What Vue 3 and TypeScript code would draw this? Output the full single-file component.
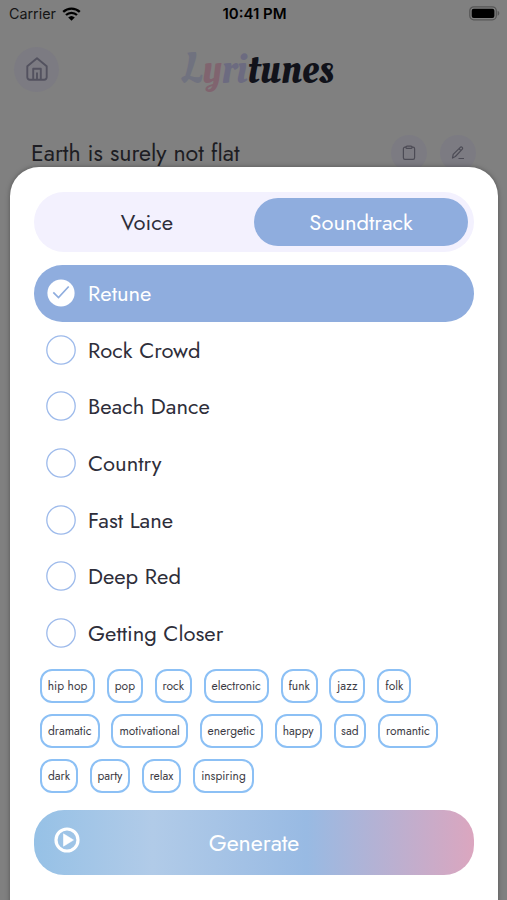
<script setup lang="ts">
import { ref } from 'vue'

interface Tag {
  name: string
  width: number
}

const tab = ref<'voice' | 'soundtrack'>('soundtrack')
const selected = ref('Retune')
const options: string[] = ['Retune', 'Rock Crowd', 'Beach Dance', 'Country', 'Fast Lane', 'Deep Red', 'Getting Closer']
const tagRows: Tag[][] = [
  [
    { name: 'hip hop', width: 55 },
    { name: 'pop', width: 36 },
    { name: 'rock', width: 37 },
    { name: 'electronic', width: 65 },
    { name: 'funk', width: 37 },
    { name: 'jazz', width: 36 },
    { name: 'folk', width: 34 },
  ],
  [
    { name: 'dramatic', width: 59.5 },
    { name: 'motivational', width: 76.5 },
    { name: 'energetic', width: 63 },
    { name: 'happy', width: 47 },
    { name: 'sad', width: 32.5 },
    { name: 'romantic', width: 60 },
  ],
  [
    { name: 'dark', width: 38 },
    { name: 'party', width: 40 },
    { name: 'relax', width: 39.5 },
    { name: 'inspiring', width: 60.5 },
  ],
]
</script>

<template>
  <div class="screen">
    <div class="status">
      <div class="carrier">
        <span>Carrier</span>
        <svg width="19" height="14" viewBox="0 0 19 14">
          <path d="M1.2 4.900a12 12 0 0 1 16.600 0M4 8a8 8 0 0 1 11 0" fill="none" stroke="#000" stroke-width="2.300" />
          <path d="M9.500 13.800 6.200 10.500a4.800 4.800 0 0 1 6.600 0z" fill="#000" />
        </svg>
      </div>
      <span class="time">10:41 PM</span>
      <svg class="battery" width="31" height="15" viewBox="0 0 31 15">
        <rect x=".8" y=".8" width="26.500" height="13" rx="4" fill="none" stroke="#565656" stroke-width="1.300" />
        <rect x="2.700" y="2.700" width="22.700" height="9.200" rx="2" fill="#000" />
        <path d="M28.600 4.800c2.300.7 2.300 4.300 0 5z" fill="#565656" />
      </svg>
    </div>

    <header class="header">
      <button class="round home" aria-label="Home">
        <svg width="22" height="24" viewBox="0 0 22 24" fill="none" stroke="#53525f" stroke-width="1.900" stroke-linejoin="round">
          <path d="M1.300 9.200 11 1.300l9.700 7.900v11a2.500 2.500 0 0 1-2.500 2.500H3.800a2.500 2.500 0 0 1-2.500-2.500z" />
          <path d="M7.200 22.500V11.800h7.600v10.700M11 15.500v7" />
        </svg>
      </button>
      <div class="logo"><span class="l">L</span><span class="y">y</span><span class="ri">ri</span>tunes</div>
    </header>

    <div class="prompt">
      <span class="prompt-text">Earth is surely not flat</span>
      <button class="round small" aria-label="Paste">
        <svg width="14" height="16" viewBox="0 0 14 16" fill="none" stroke="#4c4b55" stroke-width="1.200">
          <path d="M4 2.200H3A1.600 1.600 0 0 0 1.400 3.800v8.900A1.600 1.600 0 0 0 3 14.300h8a1.600 1.600 0 0 0 1.600-1.600V3.800A1.600 1.600 0 0 0 11 2.200h-1" />
          <rect x="4" y="1.200" width="6" height="2.200" rx="1" />
        </svg>
      </button>
      <button class="round small" aria-label="Edit">
        <svg width="14" height="14" viewBox="0 0 14 14" fill="none" stroke="#4c4b55" stroke-width="1.200" stroke-linejoin="round">
          <path d="m1.500 12 .7-3.600L9.300 1.300c1.300-1 3 .5 2 1.900L4.400 10.500zM8 2.700l1.900 1.900M7.500 12.500h5.500" />
        </svg>
      </button>
    </div>

    <section class="sheet">
      <div class="tabs">
        <button :class="['tab', { active: tab === 'voice' }]" @click="tab = 'voice'">Voice</button>
        <button :class="['tab', { active: tab === 'soundtrack' }]" @click="tab = 'soundtrack'">Soundtrack</button>
      </div>

      <ul class="options">
        <li
          v-for="name in options"
          :key="name"
          :class="['option', { selected: selected === name }]"
          @click="selected = name"
        >
          <svg class="mark" width="30" height="30" viewBox="0 0 30 30" fill="none">
            <template v-if="selected === name">
              <circle cx="15" cy="15" r="13.600" fill="#fff" />
              <path d="m7.300 14.300 5.200 5.200 10.200-11" stroke="#8fadde" stroke-width="1.700" />
            </template>
            <circle v-else cx="15" cy="15" r="14.200" stroke="#9dbaeb" stroke-width="1.300" />
          </svg>
          <span>{{ name }}</span>
        </li>
      </ul>

      <div class="tags">
        <div v-for="(row, i) in tagRows" :key="i" class="tag-row">
          <span v-for="t in row" :key="t.name" class="tag" :style="{ width: t.width + 'px' }">{{ t.name }}</span>
        </div>
      </div>

      <button class="generate">
        <svg class="play" width="26" height="26" viewBox="0 0 26 26">
          <circle cx="13" cy="13" r="11" fill="none" stroke="#fff" stroke-width="3.200" />
          <path d="M9.500 6.800v12.400l10-6.200z" fill="#fff" stroke="#fff" stroke-width=".6" stroke-linejoin="round" />
        </svg>
        <span>Generate</span>
      </button>
    </section>
  </div>
</template>

<style>
body {
  background: #808080;
}
</style>

<style scoped>
.screen {
  box-sizing: border-box;
  height: 900px;
  display: flex;
  flex-direction: column;
  overflow: hidden;
  background: #808080;
  font-family: Jost, Lato, sans-serif;
  color: #2e2e3a;
}
button {
  border: 0;
  padding: 0;
  background: none;
  font: inherit;
  color: inherit;
}
.status {
  flex-shrink: 0;
  display: grid;
  grid-template-columns: 1fr auto 1fr;
  align-items: center;
  height: 27px;
  padding: 0 7px 0 9px;
  font-family: Inter, sans-serif;
  font-size: 14.300px;
  color: #000;
}
.carrier {
  display: flex;
  align-items: center;
  gap: 6px;
  color: #151515;
}
.time {
  font-weight: 600;
  font-size: 15px;
}
.battery {
  justify-self: end;
}
.header {
  flex-shrink: 0;
  display: grid;
  grid-template-columns: 1fr auto 1fr;
  align-items: center;
  height: 84px;
  padding: 0 6px 0 14px;
}
.round {
  display: flex;
  align-items: center;
  justify-content: center;
  border-radius: 50%;
  background: #7c7b82;
}
.home {
  width: 45px;
  height: 45px;
}
.logo {
  font-family: "Oleo Script", "Liberation Serif", serif;
  font-size: 41.500px;
  line-height: 50px;
  color: #11121a;
}
.l {
  color: #70727f;
}
.y {
  color: #80646f;
}
.ri {
  color: #6c6b80;
}
.prompt {
  flex-shrink: 0;
  display: flex;
  align-items: center;
  height: 36px;
  margin-top: 24px;
  padding: 0 31px 20px;
  gap: 13px;
}
.prompt-text {
  flex: 1;
  font-size: 23.200px;
  color: #1d1d23;
}
.small {
  width: 36px;
  height: 36px;
}
.sheet {
  box-sizing: border-box;
  display: flex;
  flex-direction: column;
  flex-shrink: 0;
  height: 740px;
  margin: -24px 9px 0 10px;
  padding: 25px 24px 0;
  border-radius: 29px 29px 0 0;
  background: #fff;
  box-shadow: 0 0 5px rgba(0, 0, 0, 0.35);
  position: relative;
}
.tabs {
  box-sizing: border-box;
  display: grid;
  grid-template-columns: 1fr 1fr;
  height: 60px;
  padding: 6px;
  border-radius: 30px;
  background: #f3f1fe;
}
.tab {
  border-radius: 25px;
  font-size: 22px;
}
.tab.active {
  background: #8fadde;
  color: #fff;
}
.options {
  list-style: none;
  margin: 13px 0 0;
  padding: 0;
}
.option {
  display: flex;
  align-items: center;
  gap: 12px;
  height: 56.600px;
  padding-left: 12px;
  border-radius: 28.300px;
  font-size: 22px;
}
.option.selected {
  background: #8fadde;
  color: #fff;
}
.tags {
  display: flex;
  flex-direction: column;
  gap: 11.500px;
  margin: 8px 0 0 6px;
}
.tag-row {
  display: flex;
  gap: 11.900px;
}
.tag {
  box-sizing: border-box;
  display: flex;
  align-items: center;
  justify-content: center;
  height: 33.500px;
  border: 2px solid #8cc0f5;
  border-radius: 12px;
  font-size: 12px;
  white-space: nowrap;
  color: #3c3c46;
}
.generate {
  display: grid;
  grid-template-columns: 26px 1fr 26px;
  align-items: center;
  height: 65.500px;
  margin-top: 17.200px;
  padding: 0 20px;
  border-radius: 30px;
  background: linear-gradient(90deg, #96c1e6 0%, #b1cbe8 27%, #98bae3 62%, #dba6bf 100%);
  color: #fff;
  font-size: 23.200px;
}
.play {
  margin-top: -5px;
}
</style>
